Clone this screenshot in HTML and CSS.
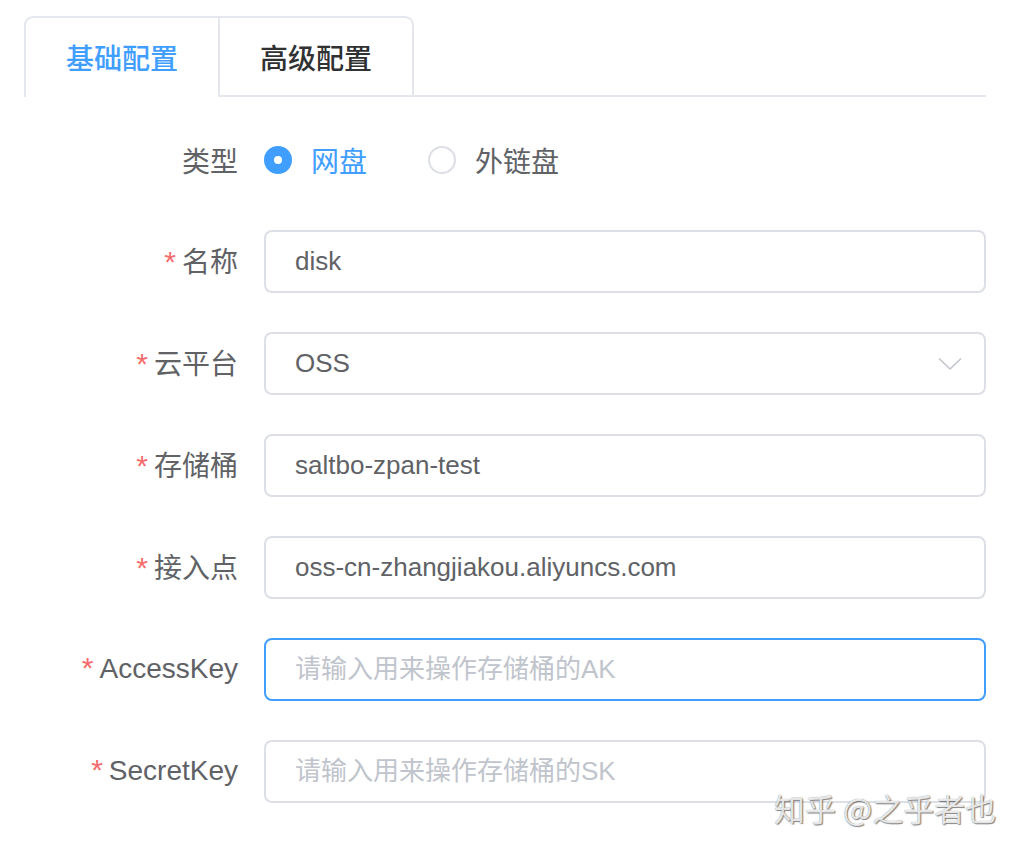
FILE: index.html
```html
<!DOCTYPE html>
<html lang="zh-CN">
<head>
<meta charset="utf-8">
<title>存储配置</title>
<link rel="stylesheet" href="styles.css">
</head>
<body>
<div class="page">
  <div class="tabs-header">
    <div class="tabs-nav">
      <div class="tab tab-active">基础配置</div>
      <div class="tab">高级配置</div>
    </div>
  </div>

  <form class="form">
    <div class="form-row form-row-radio">
      <label class="form-label">类型</label>
      <div class="form-control radio-group">
        <span class="radio radio-checked"><span class="radio-circle"></span><span class="radio-text">网盘</span></span>
        <span class="radio"><span class="radio-circle"></span><span class="radio-text">外链盘</span></span>
      </div>
    </div>

    <div class="form-row">
      <label class="form-label"><span class="req">*</span>名称</label>
      <div class="form-control"><div class="input">disk</div></div>
    </div>

    <div class="form-row">
      <label class="form-label"><span class="req">*</span>云平台</label>
      <div class="form-control">
        <div class="input select">
          <span>OSS</span>
          <svg class="arrow" width="24" height="14" viewBox="0 0 24 14"><path d="M1 1.5 L12 12 L23 1.5" fill="none" stroke="#c0c4cc" stroke-width="1.6"/></svg>
        </div>
      </div>
    </div>

    <div class="form-row">
      <label class="form-label"><span class="req">*</span>存储桶</label>
      <div class="form-control"><div class="input">saltbo-zpan-test</div></div>
    </div>

    <div class="form-row">
      <label class="form-label"><span class="req">*</span>接入点</label>
      <div class="form-control"><div class="input">oss-cn-zhangjiakou.aliyuncs.com</div></div>
    </div>

    <div class="form-row">
      <label class="form-label"><span class="req">*</span>AccessKey</label>
      <div class="form-control"><div class="input input-focus placeholder">请输入用来操作存储桶的AK</div></div>
    </div>

    <div class="form-row">
      <label class="form-label"><span class="req">*</span>SecretKey</label>
      <div class="form-control"><div class="input placeholder">请输入用来操作存储桶的SK</div></div>
    </div>
  </form>

  <div class="watermark">知乎 @之乎者也</div>
</div>
</body>
</html>
```

FILE: styles.css
```css
* { box-sizing: border-box; }

html, body {
  margin: 0;
  padding: 0;
  background: #fff;
}

body {
  font-family: "Liberation Sans", "Noto Sans CJK SC", sans-serif;
  color: #606266;
}

.page {
  position: relative;
  width: 1022px;
  height: 854px;
  padding: 16px 36px 0 24px;
  overflow: hidden;
}

/* tabs */
.tabs-header {
  display: flex;
  border-bottom: 2px solid #e4e7ed;
}

.tabs-nav {
  display: flex;
  border: 2px solid #e4e7ed;
  border-bottom: none;
  border-radius: 9px 9px 0 0;
  margin-bottom: -2px;
}

.tab {
  height: 79px;
  padding: 0 40px;
  font-size: 28px;
  font-weight: 500;
  line-height: 83px;
  color: #303133;
  border-bottom: 2px solid transparent;
}

.tab + .tab {
  border-left: 2px solid #e4e7ed;
}

.tab-active {
  color: #409eff;
  border-bottom-color: #fff;
}

/* form */
.form {
  margin-top: 31px;
  display: flex;
  flex-direction: column;
  gap: 39px;
}

.form-row {
  display: flex;
  align-items: center;
  height: 63px;
}

.form-label {
  width: 240px;
  padding-right: 26px;
  text-align: right;
  font-size: 28px;
  margin-top: -4px;
  color: #606266;
  white-space: nowrap;
}

.form-row-radio .form-label {
  margin-top: 0;
}

.req {
  color: #f56c6c;
  margin-right: 6px;
  font-size: 30px;
}

.form-control {
  flex: 1;
}

/* radios */
.radio-group {
  display: flex;
  align-items: center;
}

.radio {
  display: inline-flex;
  align-items: center;
  margin-right: 61px;
  font-size: 28px;
  color: #606266;
}

.radio-circle {
  width: 28px;
  height: 28px;
  border-radius: 50%;
  border: 2px solid #dcdfe6;
  background: #fff;
  margin-right: 19px;
  position: relative;
}

.radio-checked .radio-circle {
  background: #409eff;
  border-color: #409eff;
}

.radio-checked .radio-circle::after {
  content: "";
  position: absolute;
  left: 50%;
  top: 50%;
  width: 8px;
  height: 8px;
  margin: -4px 0 0 -4px;
  border-radius: 50%;
  background: #fff;
}

.radio-checked .radio-text {
  color: #409eff;
}

/* inputs */
.input {
  height: 63px;
  border: 2px solid #dcdfe6;
  border-radius: 8px;
  padding: 0 29px;
  font-size: 26px;
  line-height: 59px;
  color: #606266;
  white-space: nowrap;
}

.input-focus {
  border-color: #409eff;
}

.placeholder {
  color: #c0c4cc;
}

.select {
  display: flex;
  align-items: center;
  justify-content: space-between;
  padding-right: 22px;
}

.arrow {
  display: block;
}

/* watermark overlay */
.watermark {
  position: absolute;
  left: 774px;
  top: 786px;
  font-size: 31px;
  line-height: 44px;
  font-family: "Noto Sans CJK SC", sans-serif;
  color: rgba(255, 255, 255, 0.85);
  text-shadow: 1px 1px 1px rgba(0, 0, 0, 0.45), 0 0 1px rgba(0, 0, 0, 0.5);
  white-space: nowrap;
}
```
